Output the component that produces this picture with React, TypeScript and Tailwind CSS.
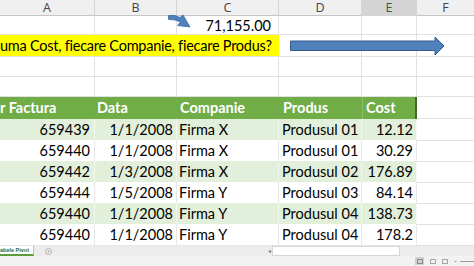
import React from "react";

type Row = [string, string, string, string, string];

const rows: Row[] = [
  ["659439", "1/1/2008", "Firma X", "Produsul 01", "12.12"],
  ["659440", "1/1/2008", "Firma X", "Produsul 01", "30.29"],
  ["659442", "1/3/2008", "Firma X", "Produsul 02", "176.89"],
  ["659444", "1/5/2008", "Firma Y", "Produsul 03", "84.14"],
  ["659440", "1/1/2008", "Firma Y", "Produsul 04", "138.73"],
  ["659440", "1/1/2008", "Firma Y", "Produsul 04", "178.2"],
];

const grid = "grid grid-cols-[95px_82px_102px_83px_55px_1fr]";
const line = "border-r border-[#e1e1e1]";

function SmallArrow() {
  return (
    <svg width="23" height="14" viewBox="0 0 23 14" className="absolute left-[168px] top-[14px]">
      <path
        d="M0.5 1.5 Q7 0.5 12 3.5 L15 1 L22 13 L9.5 11.5 L12.5 8 Q7 5 0.5 5.5 Z"
        fill="#4f81bd"
        stroke="#3b6ba5"
        strokeWidth="0.8"
      />
    </svg>
  );
}

function BigArrow() {
  return (
    <svg width="156" height="20" viewBox="0 0 156 20" className="absolute left-[290px] top-[36px]">
      <path
        d="M0.5 5 H145 V1 L154 10 L145 19 V14.5 H0.5 Z"
        fill="#4f81bd"
        stroke="#385d8a"
        strokeWidth="1"
      />
    </svg>
  );
}

function EmptyRow({ h }: { h: string }) {
  return (
    <div className={`${grid} ${h} border-b border-[#e1e1e1]`}>
      <div className={line} />
      <div className={line} />
      <div className={line} />
      <div className={line} />
      <div className={line} />
      <div />
    </div>
  );
}

export default function App() {
  return (
    <div className="relative w-[474px] h-[266px] overflow-hidden bg-white font-['Lato',sans-serif] text-[14.5px] text-black">
      {/* column letters */}
      <div className={`${grid} h-[16px] bg-[#f0f0f0] border-b border-[#c6c6c6] font-['Open_Sans',sans-serif] text-[12.5px] text-[#444] leading-[16px]`}>
        {["A", "B", "C", "D"].map((c) => (
          <div key={c} className="text-center border-r border-[#d4d4d4]">{c}</div>
        ))}
        <div className="text-center border-r border-[#d4d4d4] bg-[#d4d4d4] text-[#2f5f3f]">E</div>
        <div className="text-center">F</div>
      </div>

      {/* row with total */}
      <div className={`${grid} h-[19px] border-b border-[#e1e1e1] leading-[20px]`}>
        <div className={line} />
        <div className={line} />
        <div className={`${line} text-right pr-[7px]`}>71,155.00</div>
        <div className={line} />
        <div className={line} />
        <div />
      </div>

      {/* question */}
      <div className={`${grid} h-[22px] border-b border-[#e1e1e1] leading-[22px]`}>
        <div className="col-span-3 bg-[#ffff00] whitespace-nowrap overflow-hidden tracking-[-0.25px]">
          uma Cost, fiecare Companie, fiecare Produs?
        </div>
        <div className={line} />
        <div className={line} />
        <div />
      </div>

      <EmptyRow h="h-[20px]" />
      <EmptyRow h="h-[20px]" />

      {/* table header */}
      <div className={`${grid} h-[22px] leading-[22px] font-bold text-white`}>
        <div className="bg-[#70ad47] whitespace-nowrap overflow-hidden">r Factura</div>
        <div className="bg-[#70ad47] pl-[2px]">Data</div>
        <div className="bg-[#70ad47] pl-[3px]">Companie</div>
        <div className="bg-[#70ad47] pl-[4px]">Produs</div>
        <div className="bg-[#70ad47] pl-[3px] border-l border-[#8cc06a] border-r-2 border-r-[#3d6b26]">Cost</div>
        <div className="border-b border-[#e1e1e1]" />
      </div>

      {/* data */}
      {rows.map((r, i) => {
        const band = i % 2 === 0 ? "bg-[#e2efda]" : "bg-white";
        const cell = `${band} border-r border-b ${i % 2 === 0 ? "border-[#f2f8ee]" : "border-[#e6e6e6]"}`;
        return (
          <div key={i} className={`${grid} h-[21px] leading-[21px]`}>
            <div className={`${cell} text-right pr-[4px]`}>{r[0]}</div>
            <div className={`${cell} text-right pr-[3px]`}>{r[1]}</div>
            <div className={`${cell} pl-[2px]`}>{r[2]}</div>
            <div className={`${cell} pl-[3px] whitespace-nowrap`}>{r[3]}</div>
            <div className={`${cell} text-right pr-[3px]`}>{r[4]}</div>
            <div className="border-b border-[#e1e1e1]" />
          </div>
        );
      })}

      {/* sheet tabs + scrollbar */}
      <div className="flex h-[11px] items-stretch bg-[#ececec] border-t border-[#cfcfcf]">
        <div className="w-[34px] bg-white border-b-2 border-[#5c9a3e] border-r border-r-[#bcbcbc] text-[5.5px] font-bold text-[#2e6e3a] leading-[9px] font-['Liberation_Sans',sans-serif] whitespace-nowrap overflow-hidden">
          abele Pivot
        </div>
        <div className="w-[228px] flex items-center pl-[11px]">
          <span className="w-[7px] h-[7px] rounded-full border border-[#b5b5b5] text-[6px] leading-[5px] text-center text-[#9a9a9a]">+</span>
        </div>
        <div className="w-[10px] flex items-center justify-end pr-[1px] text-[6px] text-[#777] leading-none">◂</div>
        <div className="w-[128px] bg-white border border-[#d6d6d6]" />
      </div>

      {/* status bar */}
      <div className="flex h-[10px] items-center justify-end gap-[6px] bg-[#f2f2f2]">
        <div className="w-[9px] h-[8px] bg-[#cfcfcf] flex items-center justify-center">
          <div className="w-[6px] h-[5px] border border-[#8a8a8a]" />
        </div>
        <div className="w-[6px] h-[5px] border border-[#a5a5a5]" />
        <div className="w-[6px] h-[5px] border border-[#a5a5a5]" />
        <div className="flex items-center gap-[3px]">
          <span className="text-[8px] leading-none text-[#666]">-</span>
          <div className="w-[14px] h-px bg-[#9a9a9a]" />
        </div>
      </div>

      <SmallArrow />
      <BigArrow />
    </div>
  );
}
